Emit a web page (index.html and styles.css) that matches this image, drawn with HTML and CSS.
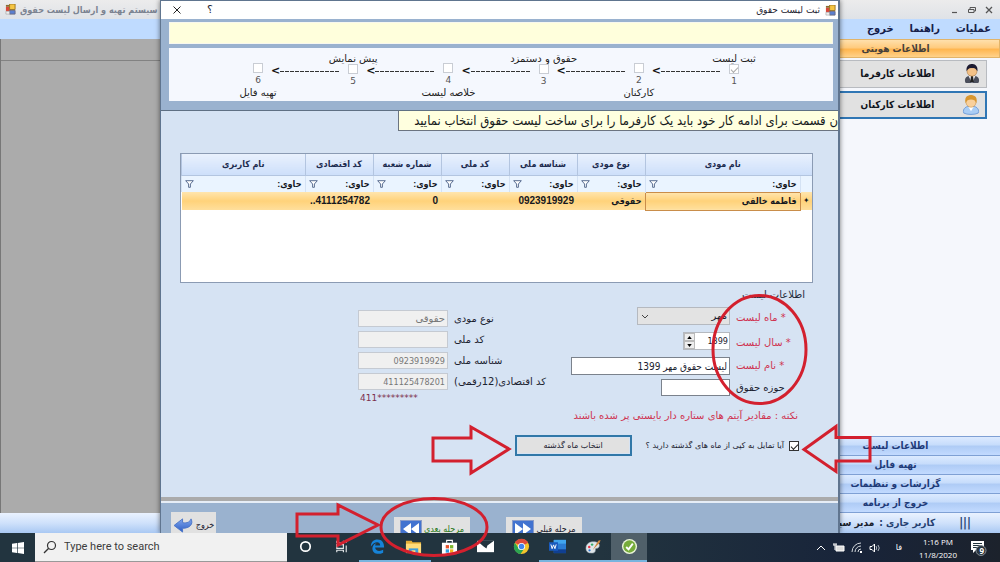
FILE: index.html
```html
<!DOCTYPE html>
<html lang="fa">
<head>
<meta charset="utf-8">
<title>ثبت لیست حقوق</title>
<link rel="stylesheet" href="styles.css">
</head>
<body>
<div class="desktop">
<svg class="defs" aria-hidden="true">
  <defs>
    <linearGradient id="blue" x1="0" y1="0" x2="0" y2="1"><stop offset="0" stop-color="#7fa6ee"/><stop offset="1" stop-color="#2c5cc4"/></linearGradient>
    <symbol id="app" viewBox="0 0 12 12"><path d="M1 3h5v5H1z" fill="#d8483a"/><path d="M1 1h5v2H1z" fill="#8a6a30"/><path d="M5 0h6v6H5z" fill="#f5c542" stroke="#9a7420"/><path d="M5 7h6v4H5z" fill="#5a7fd0" stroke="#6a6a80"/><path d="M1 8h4v3H1z" fill="#eee" stroke="#999" stroke-width=".6"/></symbol>
    <symbol id="funnel" viewBox="0 0 9 8"><path d="M.7.7h7.6L5.400 4v3.300H3.600V4z" fill="#fff" stroke="#4a5f86" stroke-width=".9"/></symbol>
  </defs>
</svg>
<div class="workspace">
  <section class="main">
    <header class="main-title">
      <svg class="app-icon"><use href="#app"/></svg>
      <span class="main-name" dir="rtl">سیستم تهیه و ارسال لیست حقوق</span>
      <span class="win-buttons">
        <button aria-label="Minimize"><svg viewBox="0 0 8 8"><path d="M1 6.500h5" stroke="#555" stroke-width="1.200"/></svg></button>
        <button aria-label="Restore"><svg viewBox="0 0 8 8"><path d="M2 3V1.500h5.500V5H6M.5 3.500H6v3H.5z" fill="none" stroke="#555"/></svg></button>
        <button aria-label="Close"><svg viewBox="0 0 8 8"><path d="M1 1l6 6M7 1L1 7" stroke="#555" stroke-width="1.300"/></svg></button>
      </span>
    </header>
    <nav class="menu" dir="rtl"><button>عملیات</button><button>راهنما</button><button>خروج</button></nav>
    <div class="main-body">
      <div class="mdi"></div>
      <aside class="sidebar" dir="rtl">
        <button class="group active">اطلاعات هویتی</button>
        <div class="tools">
          <button class="tool"><svg viewBox="0 0 20 22"><path d="M3 21c-3-5 2-9 7-9s10 4 7 9z" fill="#4b4f5c"/><path d="M6 13l4 8 4-8z" fill="#e8e8ee"/><path d="M9 13h2l1 7h-4z" fill="#222"/><circle cx="10" cy="8" r="5.500" fill="#f3c187" stroke="#a8763c" stroke-width=".6"/><path d="M4 8C3 1 8 0 10 0s7 1 6 8c-2-3-3-4-6-3.500C7 4 5 6 4 8z" fill="#1c1a30"/></svg><span>اطلاعات کارفرما</span></button>
          <button class="tool focused"><svg viewBox="0 0 20 22"><path d="M2 20c-2-5 3-8 8-8s10 3 8 8c-4 2-12 2-16 0z" fill="#a9cdf5" stroke="#6c9bd8"/><path d="M7 13l3 5 3-5z" fill="#fff"/><circle cx="10" cy="8" r="5.500" fill="#f9d09b" stroke="#c58c3e" stroke-width=".6"/><path d="M4 9C2 1 8 0 10 0s8 1 6 9c-1-3-3-4-6-4S5 6 4 9z" fill="#d9972f"/></svg><span>اطلاعات کارکنان</span></button>
        </div>
        <div class="groups">
          <button class="group">اطلاعات لیست</button>
          <button class="group">تهیه فایل</button>
          <button class="group">گزارشات و تنظیمات</button>
          <button class="group">خروج از برنامه</button>
        </div>
      </aside>
    </div>
    <footer class="status" dir="rtl"><span class="bars">|||</span><span class="user">کاربر جاری :</span><span class="user-name">مدیر سیستم</span></footer>
  </section>

  <section class="dialog" role="dialog" aria-label="ثبت لیست حقوق">
    <header class="dialog-title">
      <button aria-label="Close"><svg viewBox="0 0 8 8"><path d="M.5.5l7 7M7.500.5l-7 7" stroke="#222"/></svg></button>
      <button class="help">؟</button>
      <h1 dir="rtl">ثبت لیست حقوق</h1>
      <svg class="app-icon"><use href="#app"/></svg>
    </header>
    <div class="top">
      <div class="message"></div>
      <div class="steps">
        <div class="step below"><input type="checkbox" id="s6" disabled><span>6</span><label for="s6">تهیه فایل</label></div>
        <div class="link"><b>&lt;</b><i></i></div>
        <div class="step above"><label for="s5">پیش نمایش</label><input type="checkbox" id="s5" disabled><span>5</span></div>
        <div class="link"><b>&lt;</b><i></i></div>
        <div class="step below"><input type="checkbox" id="s4" disabled><span>4</span><label for="s4">خلاصه لیست</label></div>
        <div class="link"><b>&lt;</b><i></i></div>
        <div class="step above"><label for="s3">حقوق و دستمزد</label><input type="checkbox" id="s3" disabled><span>3</span></div>
        <div class="link"><b>&lt;</b><i></i></div>
        <div class="step below"><input type="checkbox" id="s2" disabled><span>2</span><label for="s2">کارکنان</label></div>
        <div class="link"><b>&lt;</b><i></i></div>
        <div class="step above"><label for="s1">ثبت لیست</label><input type="checkbox" id="s1" checked disabled><span>1</span></div>
      </div>
    </div>
    <div class="content">
      <div class="hint" dir="rtl">ن قسمت برای ادامه کار خود باید یک کارفرما را برای ساخت لیست حقوق انتخاب نمایید</div>
      <div class="grid-box" dir="rtl">
        <table>
          <colgroup><col class="c-mark"><col class="c-name"><col class="c-mid"><col class="c-mid"><col class="c-mid"><col class="c-mid"><col class="c-mid"><col></colgroup>
          <thead>
            <tr><th></th><th>نام مودی</th><th>نوع مودی</th><th>شناسه ملی</th><th>کد ملی</th><th>شماره شعبه</th><th>کد اقتصادی</th><th>نام کاربری</th></tr>
            <tr class="filters"><td></td>
              <td><div><span>حاوی:</span><svg><use href="#funnel"/></svg></div></td>
              <td><div><span>حاوی:</span><svg><use href="#funnel"/></svg></div></td>
              <td><div><span>حاوی:</span><svg><use href="#funnel"/></svg></div></td>
              <td><div><span>حاوی:</span><svg><use href="#funnel"/></svg></div></td>
              <td><div><span>حاوی:</span><svg><use href="#funnel"/></svg></div></td>
              <td><div><span>حاوی:</span><svg><use href="#funnel"/></svg></div></td>
              <td><div><span>حاوی:</span><svg><use href="#funnel"/></svg></div></td></tr>
          </thead>
          <tbody>
            <tr><td class="mark">✦</td><td class="current">فاطمه خالقی</td><td>حقوقی</td><td class="num">0923919929</td><td></td><td class="num">0</td><td class="num">4111254782..</td><td></td></tr>
          </tbody>
        </table>
      </div>
      <fieldset class="details">
        <legend dir="rtl">اطلاعات لیست</legend>
        <div class="columns">
          <div class="payer">
            <input id="kind" class="locked" value="حقوقی" dir="rtl" disabled><label for="kind" dir="rtl">نوع مودی</label>
            <input id="nid" class="locked" disabled><label for="nid" dir="rtl">کد ملی</label>
            <input id="legal" class="locked digits" value="0923919929" disabled><label for="legal" dir="rtl">شناسه ملی</label>
            <input id="eco" class="locked digits" value="411125478201" disabled><label for="eco" dir="rtl">کد اقتصادی(12رقمی)</label>
            <output class="masked">411*********</output>
          </div>
          <div class="period">
            <select id="month" class="month" dir="rtl"><option>مهر</option></select><label for="month" class="required" dir="rtl">* ماه لیست</label>
            <span class="spin"><span class="arrows"><button aria-label="Up"><svg viewBox="0 0 6 4"><path d="M0 4l3-4 3 4z"/></svg></button><button aria-label="Down"><svg viewBox="0 0 6 4"><path d="M0 0l3 4 3-4z"/></svg></button></span><input id="year" class="digits" value="1399"></span><label for="year" class="required" dir="rtl">* سال لیست</label>
            <input id="title" class="title" value="لیست حقوق مهر 1399" dir="rtl"><label for="title" class="required" dir="rtl">* نام لیست</label>
            <input id="area" class="area"><label for="area" class="plain" dir="rtl">حوزه حقوق</label>
          </div>
        </div>
        <p class="note" dir="rtl">نکته : مقادیر آیتم های ستاره دار بایستی پر شده باشند</p>
        <div class="copy" dir="rtl">
          <input type="checkbox" id="copy" checked><label for="copy">آیا تمایل به کپی از ماه های گذشته دارید ؟</label>
          <button class="pick">انتخاب ماه گذشته</button>
        </div>
      </fieldset>
    </div>
    <footer class="actions">
      <button class="exit"><svg viewBox="0 0 22 17"><path d="M1 9l9-7v4c5 1 8-1 9-4 3 6-2 10-9 10v4z" fill="url(#blue)" stroke="#4a74c8"/></svg><span>خروج</span></button>
      <button class="step-button next"><svg viewBox="0 0 22 18"><rect x=".5" y=".5" width="21" height="17" fill="#4273d0" stroke="#8a9cc8"/><path d="M11 3v12L3 9zM19 3v12l-8-6z" fill="#fff"/></svg><span>مرحله بعدی</span></button>
      <button class="step-button"><svg viewBox="0 0 22 18"><rect x=".5" y=".5" width="21" height="17" fill="#4273d0" stroke="#8a9cc8"/><path d="M11 3v12l8-6zM3 3v12l8-6z" fill="#fff"/></svg><span>مرحله قبلی</span></button>
    </footer>
  </section>
</div>

<footer class="taskbar">
  <button class="start" aria-label="Start"><svg viewBox="0 0 12 12"><path d="M0 1.700L5 1v4.700H0zM5.700.9L12 0v5.700H5.700zM0 6.300h5V11l-5-.7zM5.700 6.300H12V12l-6.300-.9z" fill="#fff"/></svg></button>
  <label class="search"><svg viewBox="0 0 14 14"><circle cx="8.500" cy="5.500" r="4" fill="none" stroke="#333" stroke-width="1.200"/><path d="M5.700 8.300L1 13" stroke="#333" stroke-width="1.300"/></svg><input type="text" placeholder="Type here to search"></label>
  <nav class="apps">
    <button aria-label="Cortana"><svg viewBox="0 0 18 18"><circle cx="9" cy="9" r="5" fill="none" stroke="#fff" stroke-width="1.800"/></svg></button>
    <button aria-label="Task View"><svg viewBox="0 0 18 18"><path d="M4 3v2h7V3M4 15v-2h7v2M4 7h7v4H4zM14 3v2M14 8v7" fill="none" stroke="#e4e8ea" stroke-width="1.200"/></svg></button>
    <button class="open" aria-label="Edge"><svg viewBox="0 0 18 18"><path d="M2 9C2 4 5 1.500 9 1.500c5 0 7 3.500 7 8.500H6.500c.3 4 5 4.500 8.500 2.500v3C8 19 2 15 4 9c1-2 2-3 4-3.500C6.700 6.500 6.600 7 6.500 8h5.300c0-5-6.500-4.500-9.800 1z" fill="#1683d8"/></svg></button>
    <button class="open" aria-label="File Explorer"><svg viewBox="0 0 18 18"><path d="M1 3h6l1 1.500h9V16H1z" fill="#e5ae37"/><path d="M1 6h16v10H1z" fill="#ffdc7a"/><path d="M4 11h10v5H4z" fill="#3c9ddb"/><path d="M7 13h4v3H7z" fill="#ffdc7a"/></svg></button>
    <button aria-label="Store"><svg viewBox="0 0 18 18"><path d="M6 5V2.500h6V5" fill="none" stroke="#fff" stroke-width="1.200"/><path d="M1 5h16v12H1z" fill="#fff"/><path d="M5 7.500h3.500V11H5z" fill="#e5532d"/><path d="M9.500 7.500H13V11H9.500z" fill="#7cb82f"/><path d="M5 12h3.500v3.500H5z" fill="#2f9ede"/><path d="M9.500 12H13v3.500H9.500z" fill="#f4b51e"/></svg></button>
    <button aria-label="Mail"><svg viewBox="0 0 18 18"><path d="M0 3h18v12H0z" fill="#fff"/><path d="M0 3h18l-7 5-1 3-3-2z" fill="#22343f"/></svg></button>
    <button aria-label="Chrome"><svg viewBox="0 0 18 18"><circle cx="9" cy="9" r="8" fill="#f5c52c"/><path d="M9 9L2 5a8 8 0 0 1 14 0z" fill="#de4a3c"/><path d="M2 5a8 8 0 0 0 6 12l4-6H6z" fill="#2da552"/><circle cx="9" cy="9" r="3.800" fill="#fff"/><circle cx="9" cy="9" r="2.900" fill="#4385ee"/></svg></button>
    <button class="open" aria-label="Word"><svg viewBox="0 0 18 18"><path d="M5 2h13v14H5z" fill="#2b7cd3"/><path d="M5 2h13v4H5z" fill="#41a5ee"/><path d="M5 12h13v4H5z" fill="#103f91"/><path d="M0 4.500h9.500v9H0z" fill="#185abd"/><path d="M2 6.800l1.300 4.500 1.500-4 1.500 4 1.300-4.500" fill="none" stroke="#fff"/></svg></button>
    <button class="open" aria-label="Paint"><svg viewBox="0 0 18 18"><path d="M1 11c0-5 4-7 8-7s7 2 6 5-4 1-4 3 0 4-4 4-6-2-6-5z" fill="#dfe6ea" stroke="#98a7b0" stroke-width=".6"/><circle cx="4.500" cy="9.500" r="1.300" fill="#e34"/><circle cx="7.500" cy="7" r="1.300" fill="#3a6"/><circle cx="4.800" cy="13" r="1.200" fill="#37c"/><path d="M8 13l6-10 2.500-1L15.500 5z" fill="#d08b43"/></svg></button>
    <button class="open current-app" aria-label="Payroll"><svg viewBox="0 0 18 18"><circle cx="9" cy="9" r="8" fill="#eaf4d8"/><circle cx="9" cy="9" r="6.500" fill="#76ac3a"/><path d="M5.500 9.500L8 12l4.500-6" fill="none" stroke="#fff" stroke-width="2"/></svg></button>
  </nav>
  <div class="tray">
    <button aria-label="Hidden icons"><svg viewBox="0 0 12 12"><path d="M2 8l4-4 4 4" fill="none" stroke="#fff"/></svg></button>
    <svg viewBox="0 0 12 12"><path d="M3 4h8v5H3z" fill="#ddd" stroke="#fff"/><path d="M0 3h4M2 3v5M1 1v2M3 1v2" stroke="#fff"/></svg>
    <svg viewBox="0 0 12 12"><path d="M1 10A9 9 0 0 1 10 1M4 10a6 6 0 0 1 6-6M7 10a3 3 0 0 1 3-3" fill="none" stroke="#d5dade"/><path d="M9 9h2v2H9z" fill="#fff"/></svg>
    <svg viewBox="0 0 12 12"><path d="M1 4.500h2L5.500 2v8L3 7.500H1z" fill="none" stroke="#fff"/><path d="M7 4q1.500 2 0 4M9 3q2.500 3 0 6" fill="none" stroke="#cfd5da" stroke-width=".8"/></svg>
    <span class="lang">فا</span>
    <time class="clock"><span>1:16 PM</span><span>11/8/2020</span></time>
    <button class="notices" aria-label="Notifications"><svg viewBox="0 0 18 18"><path d="M2 2h13v9H7l-3 3v-3H2z" fill="#fff"/><path d="M4 4.500h9M4 6.500h9M4 8.500h5" stroke="#22343f"/><circle cx="12" cy="11.500" r="5" fill="#2a3540" stroke="#9aa3aa" stroke-width=".8"/></svg><b>9</b></button>
  </div>
</footer>

<svg class="marks" viewBox="0 0 1000 562" preserveAspectRatio="none" fill="none" stroke="#d3202e" stroke-width="3" aria-hidden="true">
  <ellipse cx="759.500" cy="349.500" rx="46.500" ry="54"/>
  <ellipse cx="434" cy="527" rx="53" ry="28.500"/>
  <path d="M433 438h38v-11l38 22-38 24v-12h-38z"/>
  <path d="M870 437.500h-34v-11l-32 23 32 22v-10.500h34z"/>
  <path d="M297 514h41v-9l40 20-40 20v-9h-41z"/>
</svg>
</div>
</body>
</html>
```
FILE: styles.css
```css
* { box-sizing: border-box; }
body { margin: 0; font: 10px/14px "DejaVu Sans", sans-serif; color: #1b2230; }
button, input, select { font: inherit; color: inherit; margin: 0; padding: 0; border: 0; background: none; border-radius: 0; }
button { display: flex; align-items: center; justify-content: center; }
svg { display: block; flex: none; }
.defs { position: absolute; width: 0; height: 0; }

.desktop { position: relative; display: flex; flex-direction: column; height: 100vh; overflow: hidden; }
.workspace { position: relative; flex: 1; min-height: 0; overflow: hidden; }
.app-icon { width: 11px; height: 11px; }

/* main window */
.main { display: flex; flex-direction: column; height: 100%; font-family: "DejaVu Sans Condensed", "DejaVu Sans", sans-serif; }
.main-title { display: flex; align-items: center; gap: 4px; height: 19px; padding: 0 7px 0 5px; background: linear-gradient(#ececec, #dfe2e7); }
.main-name { flex: 1; font-size: 9px; font-weight: bold; color: #7b8391; white-space: nowrap; }
.main-name[dir="rtl"] { text-align: left; }
.win-buttons { display: flex; gap: 9px; }
.win-buttons svg { width: 8px; height: 8px; }
.menu { display: flex; align-items: center; gap: 16px; height: 20px; padding: 0 9px; background: #bfdbff; font-size: 11px; font-weight: bold; color: #15204a; }
.main-body { flex: 1; display: flex; min-height: 0; }
.mdi { flex: 1; background: linear-gradient(#ababab 21px, #828282 21px, #828282 22px, #ababab 22px); border-left: 1px solid #777; }
.sidebar { width: 21%; display: flex; flex-direction: column; background: #f5f7fc; border-left: 1px solid #8ea6cc; }
.group { width: 100%; height: 19px; border-bottom: 1px solid #7fa0d4; background: linear-gradient(#dceaff, #c6dcfb 45%, #aecbf5 50%, #c2daff); font-size: 10px; font-weight: bold; color: #1f3b78; }
.group.active { border: 1px solid #e2b469; background: linear-gradient(#ffe0ac, #ffcb7e 45%, #ffb650 55%, #ffd28a); color: #46413c; }
.tools { flex: 1; display: flex; flex-direction: column; gap: 3px; padding: 2px 13px; }
.tool { height: 28px; padding: 0 5px; border: 1px solid #b8bbc0; background: #e1e1e1; font-size: 10px; font-weight: bold; color: #10141c; }
.tool svg { width: 18px; height: 20px; }
.tool span { flex: 1; padding-left: 22px; }
.tool.focused { border: 2px solid #2f76b4; }
.groups { border-top: 1px solid #7fa0d4; }
.status { display: flex; align-items: center; height: 20px; padding: 0 29px; background: linear-gradient(#eaf2ff, #cfe1fb 50%, #a9c8f3); font-size: 10px; font-weight: bold; color: #24406f; white-space: nowrap; }
.bars { margin-left: 24px; font-size: 12px; }
.user-name { margin-right: 5px; color: #18202c; }

/* dialog window */
.dialog { position: absolute; top: 0; bottom: 0; left: 16%; right: 16%; display: flex; flex-direction: column; border: solid #60758f; border-width: 1px 2px 0 1px; background: #9ab2cf; box-shadow: 0 0 5px #0008; }
.dialog-title { display: flex; align-items: center; height: 18px; padding: 0 2px 0 12px; background: #fff; }
.dialog-title button svg { width: 8px; height: 8px; }
.help { margin-left: 26px; font-size: 11px; }
.dialog-title h1 { flex: 1; margin: 0 5px; font-size: 9px; font-weight: normal; }
.top { padding: 3px 5px 9px 8px; }
.message { height: 22px; background: #ffffdc; border: 1px solid #f8f8ee; }
.steps { display: flex; align-items: flex-start; height: 53px; margin-top: 4px; padding: 5px 92px 0 82px; background: #f5f8fe; }
.step { display: flex; flex-direction: column; align-items: center; width: 14px; white-space: nowrap; font-size: 10px; line-height: 12px; }
.step.below { padding-top: 10px; }
.step span { color: #555; font-size: 9px; line-height: 14px; }
.step.above label { line-height: 11px; }
.step label { color: #222; }
input[type="checkbox"] { appearance: none; width: 10px; height: 10px; flex: none; background: #fff; border: 1px solid #c9cdd4; }
input[type="checkbox"]:checked { display: grid; place-items: center; }
input[type="checkbox"]:checked::before { content: ""; width: 6px; height: 3px; border: solid #aaa; border-width: 0 0 1px 1px; transform: rotate(-45deg); }
.link { flex: 1; display: flex; align-items: center; height: 14px; margin-top: 11px; padding: 0 7px 0 6px; }
.link b { font-size: 11px; color: #111; }
.link i { flex: 1; height: 1px; background: repeating-linear-gradient(90deg, #333 0 4px, transparent 4px 5px); }

.content { flex: 1; min-height: 0; display: flex; flex-direction: column; border-top: 1px solid #5f7083; border-bottom: 4px solid #ababab; background: #d6e3f3; }
.hint { align-self: flex-end; height: 20px; padding: 0 0 0 5px; background: #ffffdf; border: 1px solid #6b7480; border-top: 0; border-right: 0; font: 13px/19px "DejaVu Sans Condensed", "DejaVu Sans", sans-serif; color: #161a20; white-space: nowrap; min-width: 65%; }

.grid-box { height: 130px; margin: 22px 25px 0 19px; background: #fff; border: 1px solid #8b9bb3; }
table { width: 100%; table-layout: fixed; border-collapse: collapse; font: bold 9px/12px "Liberation Sans", "DejaVu Sans Condensed", "DejaVu Sans", sans-serif; color: #15181f; }
.c-mark { width: 12px; }
.c-name { width: 155px; }
.c-mid { width: 68px; }
th { height: 21px; padding: 0; background: linear-gradient(#e9f1fd, #cddffa); border: solid #b3c5e0; border-width: 0 0 1px 1px; color: #1d2c4f; }
th:first-child { border-left: 0; }
td { padding: 0 3px; white-space: nowrap; overflow: hidden; }
.filters td { height: 17px; background: #eaf4ff; border-left: 1px solid #d4e2f4; }
.filters div { display: flex; align-items: center; justify-content: space-between; }
.filters svg { width: 9px; height: 8px; }
tbody td { height: 18px; text-align: right; background: linear-gradient(#ffe5ae, #ffd27a 50%, #ffdf9c); }
tbody .num { font-size: 10px; }
tbody .current { border: 1px solid #c98d4a; }
tbody .mark { padding: 0; font-size: 8px; text-align: center; }

.details { margin: 5px 25px 0 19px; padding: 0; border: 0; min-width: 0; }
legend { padding: 0 8px 0 0; margin: 0 0 0 auto; color: #222b3a; }
.columns { display: flex; justify-content: space-between; margin: 5px 9px 0 0; padding-left: 178px; }
.payer { display: grid; grid-template-columns: 90px auto; column-gap: 6px; row-gap: 4px; align-content: start; align-items: center; padding-top: 3px; }
.locked { height: 17px; padding: 0 2px; border: 1px solid #c5cad2; background: #f0f0f0; color: #777; text-align: right; }
.digits { font-family: "DejaVu Sans Condensed", "DejaVu Sans", sans-serif; font-size: 9px; }
.payer label, .period label { text-align: left; white-space: nowrap; }
.masked { font-size: 9px; line-height: 9px; color: #7c2f4d; padding-left: 2px; }
.period { display: grid; grid-template-columns: 159px 68px; column-gap: 6px; row-gap: 4px; justify-items: end; align-items: center; align-content: start; }
.period label { justify-self: start; }
.month { width: 93px; height: 18px; margin-bottom: 3px; padding: 0 2px; appearance: none; border: 1px solid #b5b9bf; background: #e3e3e3 url("data:image/svg+xml,%3Csvg xmlns='http://www.w3.org/2000/svg' width='8' height='5'%3E%3Cpath d='M1 1l3 3 3-3' fill='none' stroke='%23444'/%3E%3C/svg%3E") no-repeat 3px 6px; }
.spin { display: flex; width: 47px; height: 18px; margin-bottom: 3px; border: 1px solid #b5b9bf; background: #fff; }
.spin input { width: 100%; min-width: 0; text-align: right; padding-right: 1px; }
.arrows { display: flex; flex-direction: column; width: 11px; flex: none; background: #eee; }
.arrows button { flex: 1; width: 11px; border: 1px solid #bbb; }
.arrows svg { width: 5px; height: 3px; }
.title { width: 159px; height: 18px; padding: 0 2px; background: #fff; border: 1px solid #7b828c; font-family: "DejaVu Sans Condensed", "DejaVu Sans", sans-serif; }
.area { width: 69px; height: 17px; padding: 0 2px; background: #fff; border: 1px solid #7b828c; }
.required { color: #cf3350; }
.note { margin: 6px 11px 0 0; padding-right: 4px; line-height: 14px; color: #cf3350; }
.copy { display: flex; align-items: center; margin: 12px 11px 0 0; padding-right: 3px; font-size: 8px; }
.copy label { margin: 0 5px 0 14px; white-space: nowrap; }
.copy input[type="checkbox"] { border-color: #333; }
.copy input[type="checkbox"]::before { border-color: #222; }
.pick { width: 117px; height: 21px; border: 2px solid #3178a8; background: #e1e1e1; box-shadow: inset 0 0 0 1px #d6e3f3; }

.actions { display: flex; align-items: flex-start; height: 32px; padding: 9px 10px 0; border-top: 2px solid #e6edf6; }
.actions button { background: #e1e1e1; gap: 2px; font: 9px/14px "DejaVu Sans Condensed", "DejaVu Sans", sans-serif; white-space: nowrap; }
.exit { width: 45px; height: 26px; margin-right: 178px; }
.exit svg { width: 21px; height: 16px; }
.step-button { width: 76px; height: 24px; margin: 5px 36px 0 0; }
.step-button svg { width: 22px; height: 18px; }
.actions .next { color: #2c7a1c; }

/* taskbar */
.taskbar { display: flex; height: 29px; background: linear-gradient(90deg, #22343f 60%, #18243a 85%, #1c222c); font-family: "Open Sans", sans-serif; color: #fff; }
.start { width: 35px; }
.start svg { width: 12px; height: 12px; }
.search { display: flex; align-items: center; gap: 7px; width: 252px; padding: 0 8px; background: #f1f1f1; border-bottom: 1px solid #999; }
.search svg { width: 14px; height: 14px; }
.search input { flex: 1; min-width: 0; font: 11px/14px Roboto, sans-serif; }
.search input::placeholder { color: #3c3c3c; opacity: 1; }
.apps { display: flex; flex: 1; }
.apps button { width: 36px; padding: 0; border-bottom: 2px solid transparent; }
.apps svg { width: 17px; height: 17px; }
.apps .open { border-color: #78b4de; background-clip: padding-box; }
.apps .current-app { background: #50606a; }
.tray { display: flex; align-items: center; gap: 6px; padding-right: 13px; }
.tray svg { width: 12px; height: 12px; }
.lang { margin: 0 11px 0 9px; font: 8px/12px "DejaVu Sans", sans-serif; }
.clock { display: flex; flex-direction: column; align-items: center; font-size: 8px; line-height: 13px; white-space: nowrap; }
.tray .notices { position: relative; margin-left: 6px; }
.tray .notices svg { width: 18px; height: 18px; }
.notices b { position: absolute; right: 3px; bottom: 1px; font-size: 8px; line-height: 11px; }

/* hand-drawn callouts over the windows */
.marks { position: absolute; inset: 0; width: 100%; height: 100%; pointer-events: none; }
```
